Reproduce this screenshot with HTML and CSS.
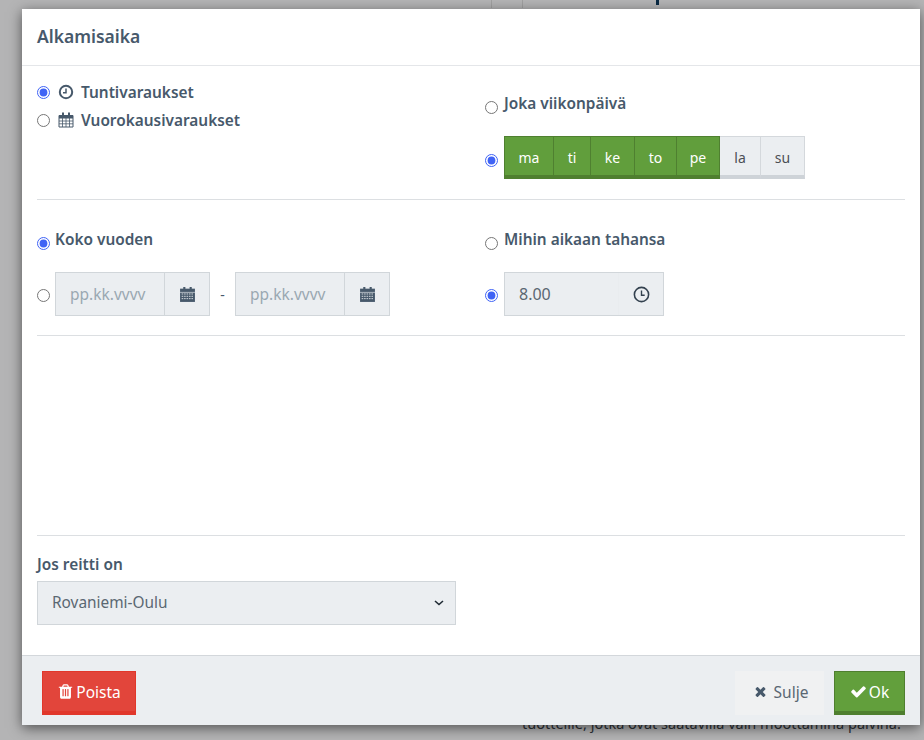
FILE: index.html
```html
<!DOCTYPE html>
<html lang="fi">
<head>
<meta charset="utf-8">
<title>Alkamisaika</title>
<link rel="stylesheet" href="styles.css">
</head>
<body>
<div class="peek">tuotteille, jotka ovat saatavilla vain moottamina päivinä.</div>
<i class="mark m1"></i><i class="mark m2"></i><i class="mark m3"></i>
<div class="modal">
  <header class="head"><h2>Alkamisaika</h2></header>
  <section class="sec sec1">
    <div class="col">
      <label class="line"><input type="radio" name="a" checked>
        <svg class="ico" viewBox="0 0 16 16"><circle cx="8" cy="8" r="6.200" fill="none" stroke="#47596b" stroke-width="2"/><path d="M8 4.500V8.700H5" fill="none" stroke="#47596b" stroke-width="1.500"/></svg>
        <b>Tuntivaraukset</b></label>
      <label class="line"><input type="radio" name="a">
        <svg class="ico" viewBox="0 0 16 16"><path d="M1 3.500h14v11.500H1z" fill="none" stroke="#47596b"/><path d="M1 3h14v3.500H1zM4 .5h2v4H4zM10 .5h2v4h-2z" fill="#47596b"/><path d="M1 9h14M1 11.800h14M4.500 6v9M8 6v9M11.500 6v9" stroke="#47596b" stroke-width=".8"/></svg>
        <b>Vuorokausivaraukset</b></label>
    </div>
    <div class="col right">
      <label class="opt opt1"><input type="radio" name="b"><b>Joka viikonpäivä</b></label>
      <div class="opt opt2"><input type="radio" name="b" checked>
        <div class="days">
          <span class="day on w50">ma</span><span class="day on w37">ti</span><span class="day on w44">ke</span><span class="day on w42">to</span><span class="day on w43">pe</span><span class="day w41">la</span><span class="day w44">su</span>
        </div>
      </div>
    </div>
  </section>
  <section class="sec sec2">
    <div class="col">
      <label class="opt opt3 tight"><input type="radio" name="c" checked><b>Koko vuoden</b></label>
      <div class="opt opt4 tight"><input type="radio" name="c">
        <div class="group">
          <span class="field ph">pp.kk.vvvv</span>
          <span class="addon"><svg class="cal" viewBox="0 0 16 16"><path d="M1 2.500h14V15H1z" fill="#47596b"/><path d="M4 1h2v3H4zM10 1h2v3h-2z" fill="#47596b"/><path d="M1 6h14" stroke="#ebeef1" stroke-width=".6"/><path d="M2.500 7.500h11M2.500 9.700h11M2.500 11.900h11" stroke="#ebeef1" stroke-width=".8" stroke-dasharray="1.500 .8"/></svg></span>
        </div>
        <span class="dash">-</span>
        <div class="group">
          <span class="field ph">pp.kk.vvvv</span>
          <span class="addon"><svg class="cal" viewBox="0 0 16 16"><path d="M1 2.500h14V15H1z" fill="#47596b"/><path d="M4 1h2v3H4zM10 1h2v3h-2z" fill="#47596b"/><path d="M1 6h14" stroke="#ebeef1" stroke-width=".6"/><path d="M2.500 7.500h11M2.500 9.700h11M2.500 11.900h11" stroke="#ebeef1" stroke-width=".8" stroke-dasharray="1.500 .8"/></svg></span>
        </div>
      </div>
    </div>
    <div class="col right">
      <label class="opt opt3"><input type="radio" name="d"><b>Mihin aikaan tahansa</b></label>
      <div class="opt opt4"><input type="radio" name="d" checked>
        <div class="timebox">
          <span class="time">8.00</span>
          <span class="clockwrap"><svg class="clock" viewBox="0 0 16 16"><circle cx="8" cy="8" r="6.700" fill="none" stroke="#33414f" stroke-width="1.500"/><path d="M8 4.200V8.700H11" fill="none" stroke="#33414f" stroke-width="1.300"/></svg></span>
        </div>
      </div>
    </div>
  </section>
  <section class="sec sec3"></section>
  <section class="sec4">
    <b class="lab">Jos reitti on</b>
    <div class="select"><span class="seltext">Rovaniemi-Oulu</span>
      <svg class="chev" viewBox="0 0 10 6"><path d="M1 1l4 3.500L9 1" fill="none" stroke="#1f2a33" stroke-width="1.600"/></svg>
    </div>
  </section>
  <footer class="foot">
    <button class="btn red"><svg class="bi tr" viewBox="0 0 1792 1792"><path fill="#fff" d="M704 1376v-704q0-14-9-23t-23-9h-64q-14 0-23 9t-9 23v704q0 14 9 23t23 9h64q14 0 23-9t9-23zm256 0v-704q0-14-9-23t-23-9h-64q-14 0-23 9t-9 23v704q0 14 9 23t23 9h64q14 0 23-9t9-23zm256 0v-704q0-14-9-23t-23-9h-64q-14 0-23 9t-9 23v704q0 14 9 23t23 9h64q14 0 23-9t9-23zm-544-992h448l-48-117q-7-9-17-11h-317q-10 2-17 11zm928 32v64q0 14-9 23t-23 9h-96v948q0 83-47 143.500t-113 60.500h-832q-66 0-113-58.500t-47-141.500v-952h-96q-14 0-23-9t-9-23v-64q0-14 9-23t23-9h309l70-167q15-37 54-63t79-26h320q40 0 79 26t54 63l70 167h309q14 0 23 9t9 23z"/></svg>Poista</button>
    <span class="spacer"></span>
    <button class="btn gray"><svg class="bi x" viewBox="0 0 1792 1792"><path fill="#47596b" d="M1490 1322q0 40-28 68l-136 136q-28 28-68 28t-68-28l-294-294-294 294q-28 28-68 28t-68-28l-136-136q-28-28-28-68t28-68l294-294-294-294q-28-28-28-68t28-68l136-136q28-28 68-28t68 28l294 294 294-294q28-28 68-28t68 28l136 136q28 28 28 68t-28 68l-294 294 294 294q28 28 28 68z"/></svg>Sulje</button>
    <button class="btn green"><svg class="bi ck" viewBox="0 0 1792 1792"><path fill="#fff" d="M1671 566q0 40-28 68l-724 724-136 136q-28 28-68 28t-68-28l-136-136-362-362q-28-28-28-68t28-68l136-136q28-28 68-28t68 28l294 295 656-657q28-28 68-28t68 28l136 136q28 28 28 68z"/></svg>Ok</button>
  </footer>
</div>
</body>
</html>
```
FILE: styles.css
```css
* { box-sizing: border-box; }
html, body { margin: 0; height: 100%; }
body {
  width: 924px; height: 740px; overflow: hidden; position: relative;
  background: #b4b4b5;
  font-family: "Noto Sans", sans-serif; font-size: 14px; color: #47596b;
}
.peek {
  position: absolute; left: 522px; top: 713px;
  font-size: 14.500px; color: #2d3238; white-space: nowrap;
}
.mark { position: absolute; top: 0; width: 1px; height: 8px; background: #a0a0a0; }
.m1 { left: 491px; }
.m2 { left: 522px; }
.m3 { left: 656px; width: 3px; height: 5px; background: #0a2a44; }
.modal {
  position: absolute; left: 22px; top: 9px; width: 898px; height: 716px;
  background: #fff; display: flex; flex-direction: column;
  box-shadow: 0 3px 12px rgba(0,0,0,.55);
}
.head { height: 57px; border-bottom: 1px solid #e4e6e9; padding: 0 15px; display: flex; align-items: center; }
.head h2 { margin: 0 0 3px; font-size: 17.500px; font-weight: 600; color: #47596b; }
b { font-weight: 600; font-size: 15.400px; color: #47596b; }
.sec { margin: 0 15px; border-bottom: 1px solid #dcdfe2; display: flex; }
.sec1 { height: 134px; }
.sec2 { height: 136px; }
.sec3 { height: 200px; }
.col { width: 448px; flex: none; }
.col.right { width: 420px; }
input[type=radio] { margin: 0; width: 13px; height: 13px; accent-color: #3f63f5; flex: none; }
.line { display: flex; align-items: center; height: 28px; }
.sec1 .col:first-child { padding-top: 12px; }
.ico { width: 16px; height: 16px; margin: 0 7px 0 8px; flex: none; }
.opt { display: flex; align-items: center; }
.opt input { margin-right: 6px; }
.opt1 { height: 22px; margin-top: 26px; }
.opt1 input { margin-top: 8px; }
.opt2 { margin-top: 22px; height: 43px; }
.opt2 input { margin-top: 5px; }
.days { display: flex; height: 43px; }
.day {
  height: 43px; display: flex; align-items: center; justify-content: center;
  background: #ebeef1; border: 1px solid #d4d8dc; border-left-width: 0; border-bottom: 4px solid #ced3d8;
  font-size: 14px; color: #4b4f55; padding-top: 2px;
}
.day.on { background: #619e3c; border-color: #4f8030; border-bottom-color: #4f7f2f; color: #fff; }
.days .day:first-child { border-left-width: 1px; }
.w50 { width: 50px; } .w37 { width: 37px; } .w44 { width: 44px; } .w42 { width: 42px; } .w41 { width: 41px; } .w43 { width: 43px; }
.opt3 { height: 22px; margin-top: 28px; }
.opt3 input { margin-top: 9px; }
.opt4 { margin-top: 22px; height: 44px; }
.opt4 input { margin-top: 2px; }
.tight input { margin-right: 5px; }
.group { display: flex; width: 155px; height: 44px; border: 1px solid #d1d6da; background: #ebeef1; }
.field { width: 109px; border-right: 1px solid #d1d6da; padding-left: 14px; display: flex; align-items: center; font-size: 15.500px; color: #9aa8b2; }
.addon { flex: 1; display: flex; align-items: center; justify-content: center; }
.cal { width: 17px; height: 17px; }
.dash { width: 25px; text-align: center; font-size: 14px; color: #47596b; }
.timebox { width: 160px; height: 44px; border: 1px solid #d1d6da; background: #ebeef1; display: flex; align-items: center; justify-content: space-between; padding-left: 14px; }
.time { font-size: 16px; color: #5a6772; }
.clockwrap { width: 45px; height: 42px; border-left: 1px solid #e9ecef; display: flex; align-items: center; justify-content: center; }
.clock { width: 17px; height: 17px; }
.sec4 { flex: 1; padding: 18px 15px 0; display: flex; flex-direction: column; }
.lab { height: 27px; }
.select { width: 419px; height: 44px; border: 1px solid #d1d6da; background: #ebeef1; display: flex; align-items: center; justify-content: space-between; padding: 0 11px 0 14px; font-size: 15.400px; color: #5a6772; }
.seltext { margin-bottom: 2px; }
.chev { width: 10px; height: 6px; }
.foot { height: 70px; border-top: 1px solid #d3d7db; background: #ebeef1; display: flex; align-items: flex-start; padding: 15px 15px 0 20px; gap: 10px; }
.spacer { flex: 1; }
.btn {
  height: 44px; display: flex; align-items: center; justify-content: center; padding: 0;
  font-family: inherit; font-size: 15.500px; border: 1px solid transparent; border-bottom-width: 4px;
}
.bi { width: 15px; height: 15px; margin-right: 2px; }
.tr { width: 17px; height: 17px; margin-right: 2px; }
.ck { width: 17px; height: 17px; margin-right: 2px; }
.red { width: 94px; background: #e2453b; border-color: #e1372b; color: #fff; }
.gray { width: 89px; background: #f0f1f2; border-color: #f0f1f2; color: #5a6772; padding-left: 2px; }
.gray .x { margin-right: 6px; }
.green { width: 71px; background: #629f3c; border-color: #4f7f2f; color: #fff; }
```
